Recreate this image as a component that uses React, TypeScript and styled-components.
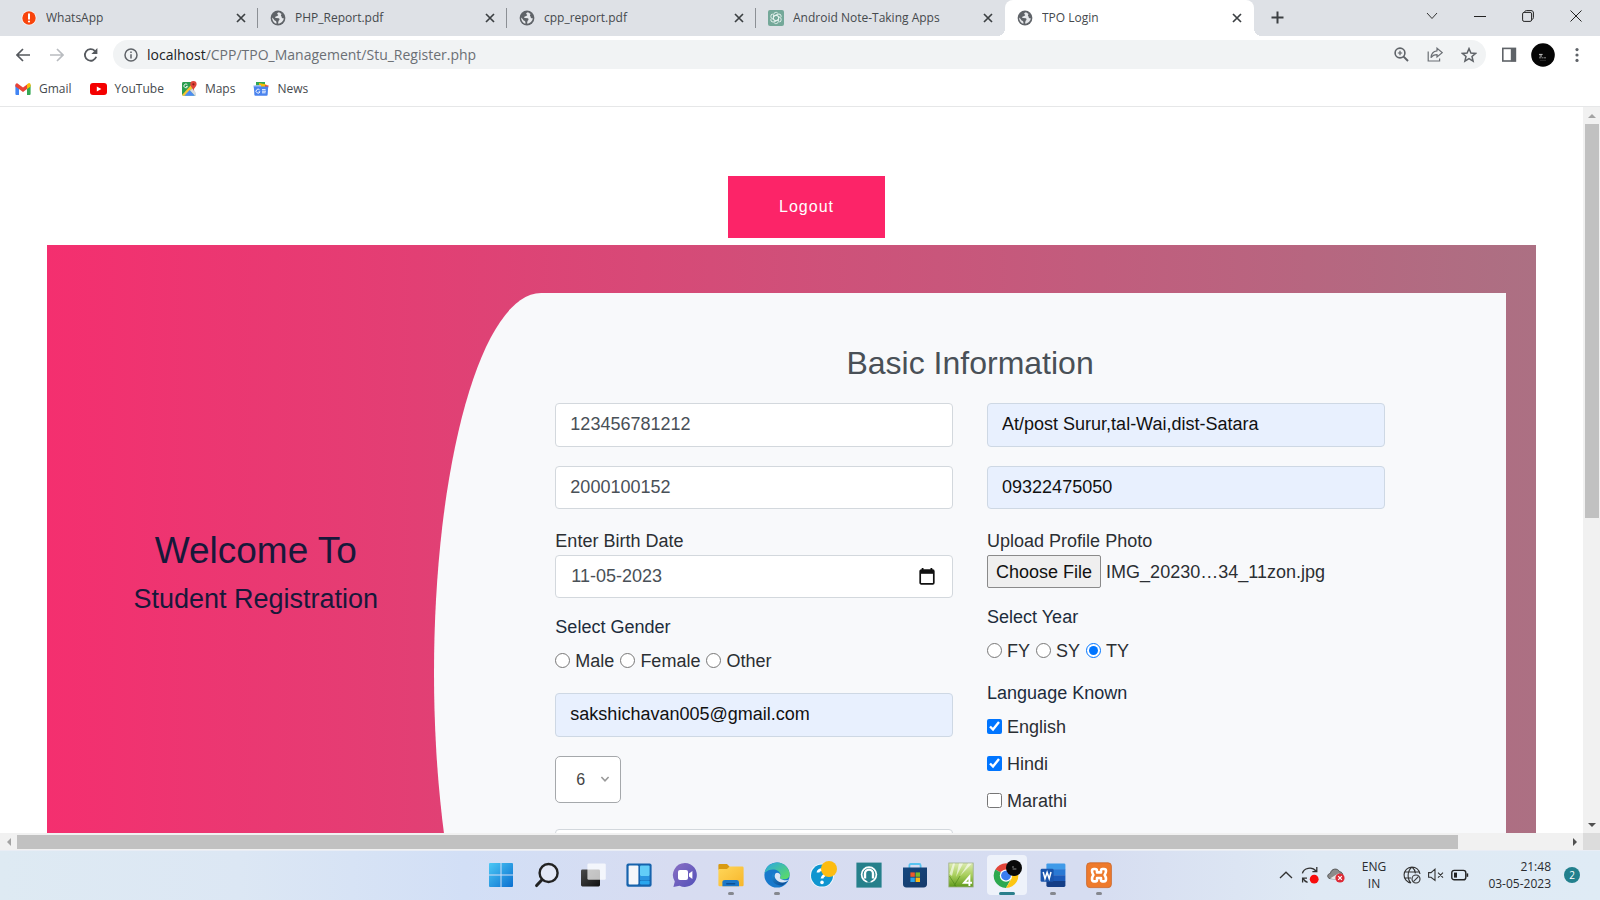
import React, { useRef, useState } from "react";
import styled, { createGlobalStyle, css } from "styled-components";

const UI = `"Open Sans", "Noto Sans", sans-serif`;
const PAGE = `"Liberation Sans", Arial, sans-serif`;

const GlobalStyle = createGlobalStyle`
  *, *::before, *::after { box-sizing: border-box; }
  body { margin: 0; background: #fff; overflow: hidden; }
  button, input, select { font: inherit; color: inherit; margin: 0; }
  svg { display: block; flex: none; }
`;

const Screen = styled.div`
  display: flex;
  flex-direction: column;
  height: 100vh;
  font-family: ${UI};
  color: #45494d;
`;

const plainButton = css`
  border: 0;
  padding: 0;
  background: none;
  display: flex;
  align-items: center;
  justify-content: center;
`;

/* ---------- Browser frame ---------- */

const TabStrip = styled.header`
  display: flex;
  flex: none;
  height: 36px;
  padding-left: 9px;
  background: #dee1e6;
`;

const Tab = styled.div<{ $active?: boolean; $last?: boolean }>`
  position: relative;
  display: flex;
  align-items: center;
  flex: 0 1 249px;
  min-width: 0;
  gap: 9px;
  padding: 0 8px 1px 12px;
  font-size: 12px;
  line-height: 18px;
  ${(p) =>
    !p.$active &&
    !p.$last &&
    css`
      &::after {
        content: "";
        position: absolute;
        right: 0;
        top: 8px;
        width: 1px;
        height: 20px;
        background: #8c9095;
      }
    `}
  ${(p) =>
    p.$active &&
    css`
      background: #fff;
      border-radius: 8px 8px 0 0;
      &::before,
      &::after {
        content: "";
        position: absolute;
        bottom: 0;
        width: 8px;
        height: 8px;
      }
      &::before {
        left: -8px;
        background: radial-gradient(circle at 0 0, transparent 8px, #fff 8px);
      }
      &::after {
        right: -8px;
        background: radial-gradient(circle at 100% 0, transparent 8px, #fff 8px);
      }
    `}
`;

const TabTitle = styled.span`
  flex: 1;
  min-width: 0;
  white-space: nowrap;
  overflow: hidden;
`;

const SmallButton = styled.button`
  ${plainButton}
  width: 18px;
  height: 18px;
`;

const NewTab = styled.button`
  ${plainButton}
  width: 46px;
  height: 34px;
`;

const WindowControls = styled.div`
  display: flex;
  margin-left: auto;
  height: 31px;
`;

const WindowButton = styled.button`
  ${plainButton}
  width: 48px;
`;

const Toolbar = styled.div`
  display: flex;
  flex: none;
  align-items: center;
  height: 36px;
  padding: 4px 6px 3px;
`;

const ToolButton = styled.button`
  ${plainButton}
  width: 34px;
  height: 29px;
`;

const AddressBar = styled.div`
  display: flex;
  flex: 1;
  align-items: center;
  height: 29px;
  margin: 0 6px 0 5px;
  padding: 0 0 0 11px;
  border-radius: 15px;
  background: #f1f3f4;
`;

const Url = styled.div`
  flex: 1;
  margin-left: 9px;
  font-size: 14px;
  line-height: 20px;
  color: #6b6f74;
  b {
    font-weight: 400;
    color: #202124;
  }
`;

const Bookmarks = styled.nav`
  display: flex;
  flex: none;
  align-items: center;
  gap: 18px;
  height: 35px;
  padding: 0 15px 1px;
  border-bottom: 1px solid #e6e7e8;
`;

const Bookmark = styled.a`
  display: flex;
  align-items: center;
  gap: 8px;
  font-size: 12px;
  line-height: 18px;
  color: #45494d;
  text-decoration: none;
`;

/* ---------- Scrolling frame ---------- */

const Frame = styled.div`
  flex: 1;
  min-height: 0;
  display: grid;
  grid-template: minmax(0, 1fr) 17px / minmax(0, 1fr) 17px;
`;

const ScrollTrack = styled.div<{ $horizontal?: boolean }>`
  display: flex;
  flex-direction: ${(p) => (p.$horizontal ? "row" : "column")};
  background: #f1f1f1;
`;

const ScrollArrow = styled.span`
  flex: 0 0 17px;
  height: 17px;
  display: flex;
  align-items: center;
  justify-content: center;
`;

const ScrollRun = styled.div<{ $horizontal?: boolean }>`
  flex: 1;
  display: flex;
  padding: ${(p) => (p.$horizontal ? "2px 0 1px" : "0 1px 0 2px")};
`;

const ScrollThumb = styled.div<{ $w: string; $h: string }>`
  width: ${(p) => p.$w};
  height: ${(p) => p.$h};
  background: #c1c1c1;
`;

const ScrollCorner = styled.div`
  background: #dcdcdc;
`;

/* ---------- Registration page ---------- */

const Page = styled.main`
  overflow: hidden;
  padding: 69px 3% 0;
  font-family: ${PAGE};
  background: #fff;
`;

const LogoutRow = styled.div`
  display: flex;
  justify-content: center;
  padding: 0 0 7px 30px;
`;

const Logout = styled.button`
  ${plainButton}
  width: 157px;
  height: 62px;
  background: #fc2468;
  color: #fff;
  font-size: 16px;
  letter-spacing: 1px;
`;

const Register = styled.section`
  display: grid;
  grid-template-columns: 1fr 3fr;
  padding: 48px 2%;
  background: linear-gradient(to right, #f42f6f, #ac7083);
`;

const Welcome = styled.div`
  padding-top: 236px;
  text-align: center;
  color: #17183a;
`;

const WelcomeTitle = styled.h1`
  margin: 0 0 6px;
  font-size: 37px;
  font-weight: 400;
  line-height: 44px;
`;

const WelcomeText = styled.h2`
  margin: 0;
  font-size: 27px;
  font-weight: 400;
  line-height: 40px;
`;

const Card = styled.form`
  min-height: 760px;
  padding: 50px 121px;
  background: #f8f9fb;
  border-radius: 10% 0 0 10% / 50% 0 0 50%;
  font-size: 18px;
  line-height: 26px;
  color: #2b2f33;
`;

const CardTitle = styled.h3`
  margin: 0 0 20px;
  text-align: center;
  font-size: 32px;
  font-weight: 400;
  line-height: 40px;
  color: #495057;
`;

const Columns = styled.div`
  display: grid;
  grid-template-columns: 1fr 1fr;
  gap: 34px;
`;

const Column = styled.div`
  display: flex;
  flex-direction: column;
  gap: 19px;
`;

const fieldBox = css<{ $filled?: boolean; $tall?: boolean }>`
  width: 100%;
  height: ${(p) => (p.$tall ? 44 : 43)}px;
  padding: 0 14px 1px;
  border: 1px solid ${(p) => (p.$filled ? "#ced8e4" : "#d3d8dd")};
  border-radius: 4px;
  background: ${(p) => (p.$filled ? "#e8f0fe" : "#fff")};
  color: ${(p) => (p.$filled ? "#111" : "#495057")};
`;

const Field = styled.input<{ $filled?: boolean; $tall?: boolean }>`
  ${fieldBox}
  outline: 0;
`;

const DateBox = styled.div<{ $filled?: boolean; $tall?: boolean }>`
  ${fieldBox}
  display: flex;
  align-items: center;
  padding-right: 16px;
`;

const DateInput = styled.input`
  flex: 1;
  min-width: 0;
  padding: 0 1px;
  border: 0;
  outline: 0;
  background: none;
`;

const Label = styled.label`
  display: block;
  margin-bottom: 1px;
`;

const Options = styled.fieldset`
  margin: 0;
  padding: 0;
  border: 0;
  min-width: 0;
`;

const Legend = styled.legend`
  padding: 0;
  margin-bottom: 11px;
  line-height: 20px;
  color: #202c3c;
`;

const OptionRow = styled.div`
  display: flex;
  gap: 6px;
`;

const OptionList = styled.div`
  display: flex;
  flex-direction: column;
  align-items: flex-start;
  gap: 11px;
`;

const Option = styled.label`
  display: flex;
  align-items: center;
  gap: 5px;
  input {
    width: 15px;
    height: 15px;
    margin-bottom: 2px;
  }
`;

const FileRow = styled.div`
  display: flex;
  align-items: center;
  gap: 5px;
  white-space: nowrap;
`;

const FileButton = styled.button`
  height: 33px;
  padding: 0 8px;
  border: 1px solid #8a8a8a;
  border-radius: 2px;
  background: #efefef;
  color: #111;
`;

const SelectWrap = styled.div`
  position: relative;
  align-self: flex-start;
  margin-bottom: 7px;
  svg {
    position: absolute;
    right: 11px;
    top: 18px;
    pointer-events: none;
  }
`;

const Select = styled.select`
  display: block;
  appearance: none;
  width: 66px;
  height: 47px;
  padding: 0 20px;
  border: 1px solid #a5a8ab;
  border-radius: 5px;
  background: #fff;
  font-size: 16px;
  color: #444;
`;

/* ---------- Taskbar ---------- */

const Taskbar = styled.footer`
  display: grid;
  grid-template-columns: 1fr auto 1fr;
  flex: none;
  height: 50px;
  padding-bottom: 1px;
  border-top: 1px solid #e9edf5;
  background: linear-gradient(90deg, #deeaf3 0%, #dce7f4 15%, #d2dff6 29%, #d7dcf1 42%, #d6ddf1 68%, #dfe9f4 82%, #dfebf5 100%);
`;

const Apps = styled.div`
  grid-column: 2;
  display: flex;
  align-items: center;
  gap: 6px;
`;

const AppButton = styled.button<{ $state?: "open" | "active" }>`
  ${plainButton}
  position: relative;
  width: 40px;
  height: 40px;
  border-radius: 4px;
  background: ${(p) => (p.$state === "active" ? "#eef2fa" : "none")};
  ${(p) =>
    p.$state &&
    css`
      &::after {
        content: "";
        position: absolute;
        bottom: 0;
        left: ${p.$state === "active" ? 12 : 17}px;
        width: ${p.$state === "active" ? 16 : 6}px;
        height: 3px;
        border-radius: 2px;
        background: ${p.$state === "active" ? "#2b7f8c" : "#85888f"};
      }
    `}
`;

const Tray = styled.div`
  grid-column: 3;
  display: flex;
  align-items: center;
  justify-content: flex-end;
  padding-right: 20px;
  color: #2a2c30;
  font-size: 12px;
  line-height: 17px;
`;

const TrayIcons = styled.div<{ $gap: number }>`
  display: flex;
  align-items: center;
  gap: ${(p) => p.$gap}px;
`;

const Language = styled.div`
  width: 58px;
  text-align: center;
`;

const Clock = styled.div`
  width: 82px;
  text-align: right;
`;

const Count = styled.span`
  width: 16px;
  height: 16px;
  margin-left: 13px;
  border-radius: 8px;
  background: #22808d;
  color: #fff;
  font-size: 10px;
  line-height: 16px;
  text-align: center;
`;

/* ---------- Icons ---------- */

const Globe = () => (
  <svg width="16" height="16" viewBox="0 0 16 16">
    <circle cx="8" cy="8" r="7.4" fill="#5f6368" />
    <path d="M9 2.2 C7 2.6 6.8 4 7.8 4.6 C9 5 7.6 6.3 6 6.4 C4.8 6.6 5 8 6.3 8 L8.8 8.2 C10 8.6 9.6 10.2 8.6 10.8 L8 13.4 C10 14 13.8 11.5 13.7 8 C12.6 8.6 11.4 7.6 11.6 6.4 C10.6 6 10.8 4.8 11.6 4 Z M2.2 7.4 C2 10.4 4 13 6.6 13.6 C6.4 12 6.4 11.4 5.4 10.8 C4 10.4 4.4 9 2.2 7.4 Z" fill="#e6e8eb" />
  </svg>
);

const Alert = () => (
  <svg width="16" height="16" viewBox="0 0 16 16">
    <circle cx="8" cy="8" r="7.6" fill="#fff" opacity=".7" />
    <circle cx="8" cy="8" r="6.7" fill="#f8440c" />
    <path d="M8 4.2 V8.8" stroke="#fff" strokeWidth="2" strokeLinecap="round" />
    <circle cx="8" cy="11.5" r="1.1" fill="#fff" />
  </svg>
);

const Knot = () => (
  <svg width="16" height="16" viewBox="0 0 16 16">
    <rect width="16" height="16" rx="2" fill="#74a899" />
    <g fill="none" stroke="#e6f3ef" strokeWidth=".9">
      {[0, 60, 120, 180, 240, 300].map((a) => (
        <path key={a} d="M5.6 6.4 V4.6 A2.4 2.4 0 0 1 9.8 3.2 M8 5 L10.6 6.5 V9.4" transform={`rotate(${a} 8 8)`} />
      ))}
    </g>
  </svg>
);

const Cross = () => (
  <svg width="10" height="10" viewBox="0 0 10 10">
    <path d="M1 1 L9 9 M9 1 L1 9" stroke="#3c4043" strokeWidth="1.7" />
  </svg>
);

const Plus = () => (
  <svg width="13" height="13" viewBox="0 0 13 13">
    <path d="M6.5 0.5 V12.5 M0.5 6.5 H12.5" stroke="#3c4043" strokeWidth="2" />
  </svg>
);

const WinChevron = () => (
  <svg width="12" height="8" viewBox="0 0 12 8">
    <path d="M1 1 L6 6.5 L11 1" fill="none" stroke="#333" />
  </svg>
);
const WinMin = () => (
  <svg width="12" height="12" viewBox="0 0 12 12">
    <path d="M0 6.5 H12" stroke="#222" />
  </svg>
);
const WinMax = () => (
  <svg width="12" height="12" viewBox="0 0 12 12">
    <g fill="none" stroke="#222">
      <rect x=".6" y="2.4" width="9" height="9" rx="1.5" />
      <path d="M2.6 2.3 C2.8 1 3.4 .6 4.4 .6 H9 C10.6 .6 11.4 1.4 11.4 3 V7.6 C11.4 8.8 10.8 9.2 9.8 9.4" />
    </g>
  </svg>
);
const WinClose = () => (
  <svg width="12" height="12" viewBox="0 0 12 12">
    <path d="M.5 .5 L11.5 11.5 M11.5 .5 L.5 11.5" stroke="#222" />
  </svg>
);

const Arrow = ({ forward }: { forward?: boolean }) => (
  <svg width="14" height="14" viewBox="0 0 14 14">
    <path
      d={forward ? "M0 7 H12.6 M7 1 L13 7 L7 13" : "M14 7 H1.4 M7 1 L1 7 L7 13"}
      fill="none"
      stroke={forward ? "#b9bcc0" : "#55595e"}
      strokeWidth="1.7"
    />
  </svg>
);

const Reload = () => (
  <svg width="16" height="16" viewBox="0 0 16 16">
    <path d="M13.2 9.8 A5.8 5.8 0 1 1 11.8 3.8" fill="none" stroke="#55595e" strokeWidth="1.8" />
    <path d="M14.4 1 V7 H8.4 Z" fill="#55595e" />
  </svg>
);

const Info = () => (
  <svg width="14" height="14" viewBox="0 0 14 14">
    <circle cx="7" cy="7" r="6" fill="none" stroke="#5f6368" strokeWidth="1.5" />
    <path d="M7 6.2 V10.4 M7 3.6 V5" stroke="#5f6368" strokeWidth="1.5" />
  </svg>
);

const Magnify = () => (
  <svg width="15" height="15" viewBox="0 0 15 15" fill="none" stroke="#5f6368">
    <circle cx="6" cy="6" r="4.9" strokeWidth="1.6" />
    <path d="M9.6 9.6 L14 14" strokeWidth="2" />
    <path d="M3.8 6 H8.2 M6 3.8 V8.2" strokeWidth="1.2" />
  </svg>
);

const Share = () => (
  <svg width="16" height="15" viewBox="0 0 16 15" fill="none" stroke="#6b6f74" strokeWidth="1.2">
    <path d="M1.2 4.6 V14 H12.6 V11.6" />
    <path d="M10 1.2 L15.2 5.6 L10 10 V7.6 C7 7.6 5.2 8.8 4 10.8 C4.2 6.8 6.4 4.2 10 3.8 Z" />
  </svg>
);

const Star = () => (
  <svg width="16" height="16" viewBox="0 0 16 16">
    <path d="M8 1.6 L9.9 6 L14.6 6.4 L11 9.5 L12.1 14.2 L8 11.7 L3.9 14.2 L5 9.5 L1.4 6.4 L6.1 6 Z" fill="none" stroke="#5f6368" strokeWidth="1.5" />
  </svg>
);

const SidePanel = () => (
  <svg width="16" height="16" viewBox="0 0 16 16">
    <rect x="1.8" y="1.4" width="12.6" height="12.6" fill="none" stroke="#5f6368" strokeWidth="1.6" />
    <rect x="9.8" y="1" width="5" height="13.4" fill="#5f6368" />
  </svg>
);

const Avatar = () => (
  <svg width="24" height="24" viewBox="0 0 24 24">
    <circle cx="12" cy="12" r="11.8" fill="#050505" />
    <path d="M8 11.4 H11.6 M8.6 13 H11" stroke="#ccc" strokeWidth="1" />
    <path d="M8 14.8 H15.4" stroke="#999" strokeWidth=".9" strokeDasharray="2 .5" />
    <path d="M9 17.4 H15" stroke="#444" strokeWidth=".6" />
  </svg>
);

const Dots = () => (
  <svg width="4" height="16" viewBox="0 0 4 16" fill="#5f6368">
    <circle cx="2" cy="2.6" r="1.6" />
    <circle cx="2" cy="8" r="1.6" />
    <circle cx="2" cy="13.4" r="1.6" />
  </svg>
);

const GmailIcon = () => (
  <svg width="16" height="12" viewBox="0 0 16 12">
    <path d="M.4 1.6 V10.8 Q.4 12 1.4 12 H4 V5 Z" fill="#4285f4" />
    <path d="M15.6 1.6 V10.8 Q15.6 12 14.6 12 H12 V5 Z" fill="#34a853" />
    <path d="M12 1.2 L14 0 Q15.6 0 15.6 1.8 V3.4 L12 6 Z" fill="#fbbc04" />
    <path d="M.4 3.4 V1.8 Q.6 0 2.2 .2 L8 4.6 L12 1.4 V6 L8 9 L4 6 Z" fill="#ea4335" />
  </svg>
);

const YouTubeIcon = () => (
  <svg width="17" height="12" viewBox="0 0 17 12">
    <rect width="17" height="12" rx="3" fill="#f40000" />
    <path d="M6.8 3.4 L11.4 6 L6.8 8.6 Z" fill="#fff" />
  </svg>
);

const MapsIcon = () => (
  <svg width="15" height="15" viewBox="0 0 15 15">
    <path d="M1.4 1 H9 L13.6 14.6 H1.4 Q0 14.6 0 13 V2.4 Q0 1 1.4 1 Z" fill="#2a9d4f" />
    <path d="M0 14 L10 3 L12 6 L3 14.8 H1 Z" fill="#f5c532" />
    <path d="M2.4 14.8 L7.6 9 L13 14.8 Z" fill="#4c8bf5" />
    <path d="M8 9.6 L11 7 L14 12 V14.4 L13 14.8 Z" fill="#d9dce0" />
    <path d="M11.4 0 A3.2 3.2 0 0 1 14.6 3.3 C14.6 5.6 12 6.6 11.4 10 C10.8 6.6 8.2 5.6 8.2 3.3 A3.2 3.2 0 0 1 11.4 0 Z" fill="#e0443a" />
    <circle cx="11.4" cy="3.3" r="1.1" fill="#8c1c14" />
    <path d="M5.4 3.8 A1.9 1.9 0 1 0 5.6 5.6 H4" fill="none" stroke="#fff" strokeWidth=".9" />
  </svg>
);

const NewsIcon = () => (
  <svg width="16" height="14" viewBox="0 0 16 14">
    <rect x="3" y="0" width="9" height="5" fill="#34a853" />
    <path d="M6 1 L13.4 2.4 V6 H6 Z" fill="#fbbc04" />
    <path d="M.2 3.4 L8 3 V8 H1.6 Z" fill="#a6c0ee" />
    <path d="M12 3 L15.6 3.6 L15 6 H12 Z" fill="#ea4335" />
    <path d="M.8 4.6 H15.2 L14.6 13 Q14.5 13.8 13.6 13.8 H2.4 Q1.5 13.8 1.4 13 Z" fill="#4a83ee" />
    <path d="M6.6 7.8 A2 2 0 1 0 7 9.8 H5.6 M9 7.6 H12.6 M9 9.2 H13 M9 10.8 H12.6" fill="none" stroke="#fff" strokeWidth=".9" />
  </svg>
);

const Calendar = () => (
  <svg width="16" height="17" viewBox="0 0 16 17">
    <path d="M3.6 0 V3 M12.4 0 V3" stroke="#111" strokeWidth="1.8" />
    <rect x="1.2" y="2.2" width="13.6" height="13.6" rx="1" fill="none" stroke="#111" strokeWidth="1.7" />
    <rect x="1" y="2" width="14" height="3.8" fill="#111" />
  </svg>
);

const Triangle = ({ dir, color }: { dir: "up" | "down" | "left" | "right"; color: string }) => {
  const d = {
    up: "M0 6 L4 2 L8 6 Z",
    down: "M0 2 L4 6 L8 2 Z",
    left: "M6 0 L2 4 L6 8 Z",
    right: "M2 0 L6 4 L2 8 Z",
  }[dir];
  return (
    <svg width="8" height="8" viewBox="0 0 8 8">
      <path d={d} fill={color} />
    </svg>
  );
};

const A = ({ children }: { children: React.ReactNode }) => (
  <svg width="28" height="28" viewBox="0 0 28 28">
    {children}
  </svg>
);

const Gradient = ({ id, from, to }: { id: string; from: string; to: string }) => (
  <linearGradient id={id} x1="0" y1="0" x2="1" y2="1">
    <stop offset="0" stopColor={from} />
    <stop offset="1" stopColor={to} />
  </linearGradient>
);

const apps: { name: string; state?: "open" | "active"; icon: React.ReactNode }[] = [
  {
    name: "Start",
    icon: (
      <A>
        <defs><Gradient id="win" from="#4cc8f5" to="#0a6fd0" /></defs>
        <path d="M2 3 Q2 2 3 2 H13.5 V13.5 H2 Z M14.5 2 H25 Q26 2 26 3 V13.5 H14.5 Z M2 14.5 H13.5 V26 H3 Q2 26 2 25 Z M14.5 14.5 H26 V25 Q26 26 25 26 H14.5 Z" fill="url(#win)" />
      </A>
    ),
  },
  {
    name: "Search",
    icon: (
      <A>
        <circle cx="15.6" cy="12" r="9" fill="#e9edf7" fillOpacity=".7" stroke="#222" strokeWidth="2.4" />
        <path d="M9 18.8 L3.6 24.6" stroke="#222" strokeWidth="3" strokeLinecap="round" />
      </A>
    ),
  },
  {
    name: "Task view",
    icon: (
      <A>
        <defs><Gradient id="tv" from="#4a4a4a" to="#111" /></defs>
        <rect x="2" y="8.4" width="19" height="17" rx="1.4" fill="url(#tv)" />
        <rect x="8.4" y="2.4" width="18.4" height="16.4" rx="1.4" fill="#fff" fillOpacity=".72" />
      </A>
    ),
  },
  {
    name: "Widgets",
    icon: (
      <A>
        <rect x="1.4" y="2.4" width="25.2" height="23.4" rx="2" fill="#1663ad" />
        <rect x="3.6" y="4.6" width="9.8" height="19" rx="1" fill="#f4f6fa" />
        <rect x="15" y="4.6" width="9.6" height="10.4" rx="1" fill="#63cdf8" />
        <rect x="15" y="15" width="9.6" height="4" fill="#2b95e0" />
        <rect x="15" y="19.6" width="9.6" height="4" rx="1" fill="#29a6ee" />
      </A>
    ),
  },
  {
    name: "Chat",
    icon: (
      <A>
        <defs><Gradient id="chat" from="#8a6fc4" to="#5250b8" /></defs>
        <path d="M14 2 A12 12 0 1 1 8.6 24.8 L2.4 26 L3.8 20.4 A12 12 0 0 1 14 2 Z" fill="url(#chat)" />
        <rect x="7" y="9" width="10" height="10" rx="2" fill="#fff" />
        <path d="M18 12.4 L21.4 10 V18 L18 15.6 Z" fill="#fff" />
      </A>
    ),
  },
  {
    name: "File Explorer",
    state: "open",
    icon: (
      <A>
        <defs><Gradient id="fe" from="#ffd659" to="#f7b62b" /></defs>
        <path d="M1.4 4 Q1.4 3 2.6 3 H10 L12.4 5.4 V9 H1.4 Z" fill="#d99a12" />
        <path d="M1.4 8 H10 L12.6 5.6 H25.4 Q26.6 5.6 26.6 6.8 V24 Q26.6 25.2 25.4 25.2 H2.6 Q1.4 25.2 1.4 24 Z" fill="url(#fe)" />
        <path d="M5.4 25.2 V21.4 Q5.4 19 8 19 H19.6 Q22 19 22 21.4 V25.2 Z" fill="#1b77c8" />
        <rect x="9" y="22" width="9.4" height="1.6" rx=".8" fill="#0c4f93" />
      </A>
    ),
  },
  {
    name: "Edge",
    state: "open",
    icon: (
      <A>
        <defs>
          <Gradient id="e1" from="#2aa5e6" to="#5fe05c" />
          <Gradient id="e2" from="#1f8fd8" to="#0b3f86" />
        </defs>
        <circle cx="14" cy="14" r="12.6" fill="#1879cc" />
        <path d="M1.6 12 A12.6 12.6 0 0 1 26.6 13 C26.6 18 22 19 18.4 18 C15.8 17 17.6 16 17.6 14 C17 8 7 6.4 1.6 12 Z" fill="url(#e1)" />
        <path d="M10.4 12 C6 18 11 25 19.6 24.6 L25 20 C20 23 12 21 10.4 12 Z" fill="url(#e2)" />
        <path d="M12.4 12.4 C10 16 14 21.6 19.6 21.4 C22.6 21.2 25 20 26 18.4 C23 20 19.6 19 18 18 C15.8 17 17.6 16 17.4 14 C16.4 12 14 11.2 12.4 12.4 Z" fill="#dce6f5" />
      </A>
    ),
  },
  {
    name: "Help",
    icon: (
      <A>
        <circle cx="13" cy="14.6" r="12" fill="#f2f7fc" />
        <circle cx="13" cy="14.6" r="11" fill="#0f95d0" />
        <path d="M9 11.6 C9 7.6 17 7.4 17 11.8 C17 14.4 13 14.4 13 17.6" fill="none" stroke="#fff" strokeWidth="2.8" />
        <circle cx="13" cy="21.4" r="1.8" fill="#fff" />
        <circle cx="20" cy="8" r="8" fill="#fdbc10" />
      </A>
    ),
  },
  {
    name: "Headset",
    icon: (
      <A>
        <rect x="1.4" y="1.6" width="25.2" height="25" fill="#26808b" />
        <circle cx="14" cy="13.6" r="7.4" fill="none" stroke="#fff" strokeWidth="1.7" />
        <path d="M10 17.6 V12.6 A4 4 0 0 1 18 12.6 V17.6" fill="none" stroke="#fff" strokeWidth="2.4" />
        <path d="M12.4 21.6 V18 H15.6 V21.6 Z" fill="#26808b" />
      </A>
    ),
  },
  {
    name: "Store",
    icon: (
      <A>
        <defs><Gradient id="st" from="#15477e" to="#163a6b" /></defs>
        <path d="M8.4 8 V4.4 Q8.4 3 9.8 3 H18.2 Q19.6 3 19.6 4.4 V8" fill="none" stroke="#59c3f0" strokeWidth="1.8" />
        <path d="M2 6.4 H26 V23 Q26 26.4 22.6 26.4 H5.4 Q2 26.4 2 23 Z" fill="url(#st)" />
        <rect x="9.4" y="11.4" width="4.4" height="4.4" fill="#ef5a2b" />
        <rect x="14.6" y="11.4" width="4.4" height="4.4" fill="#7db928" />
        <rect x="9.4" y="16.6" width="4.4" height="4.4" fill="#2ba3e8" />
        <rect x="14.6" y="16.6" width="4.4" height="4.4" fill="#fdb913" />
      </A>
    ),
  },
  {
    name: "Editor",
    icon: (
      <A>
        <defs>
          <linearGradient id="ed" x1="0" y1="0" x2="0" y2="1">
            <stop offset="0" stopColor="#dcebb0" />
            <stop offset=".5" stopColor="#a9cf5c" />
            <stop offset="1" stopColor="#5f9a1c" />
          </linearGradient>
        </defs>
        <rect x="1.8" y="2" width="24.4" height="24" fill="url(#ed)" stroke="#9fb08a" strokeWidth=".8" />
        <path d="M2.4 13 L6 2.6 H8 L5 15 Z M12 2.6 H16 L9 16 Z M21 2.6 H25 L13 15 Z" fill="#fff" opacity=".6" />
        <path d="M2.4 15 L9 25.4 M7 25 L13 15" stroke="#3f7a12" opacity=".5" />
        <path d="M22.4 25 V15.6 L17 21.8 H25" fill="none" stroke="#fff" strokeWidth="1.9" />
      </A>
    ),
  },
  {
    name: "Chrome",
    state: "active",
    icon: (
      <svg width="30" height="30" viewBox="0 0 30 30">
        <path d="M14 15.6 L3.3 9.4 A12.4 12.4 0 0 1 24.7 9.4 Z" fill="#e2453a" />
        <path d="M14 15.6 L3.3 9.4 A12.4 12.4 0 0 0 14 28 L19.2 18.6 Z" fill="#2da94f" />
        <path d="M14 9.4 H24.7 A12.4 12.4 0 0 1 14 28 L19.4 18.7 Z" fill="#fdc613" />
        <circle cx="14" cy="15.6" r="6.2" fill="#fff" />
        <circle cx="14" cy="15.6" r="4.9" fill="#3a7df0" />
        <circle cx="22" cy="8" r="8" fill="#080808" />
        <path d="M20 7 H22 M20.6 9 H24.4" stroke="#aaa" strokeWidth=".8" />
      </svg>
    ),
  },
  {
    name: "Word",
    state: "open",
    icon: (
      <A>
        <path d="M7.4 3.6 Q7.4 2.4 8.6 2.4 H25 Q26.4 2.4 26.4 3.8 V8.4 H7.4 Z" fill="#3f9ae8" />
        <rect x="7.4" y="8.2" width="19" height="6" fill="#2a79d4" />
        <rect x="7.4" y="14.2" width="19" height="6" fill="#1c5bba" />
        <path d="M7.4 20 H26.4 V24.6 Q26.4 26 25 26 H8.8 Q7.4 26 7.4 24.6 Z" fill="#143e87" />
        <rect x="1.6" y="7.8" width="13" height="13" rx="1.4" fill="#1a55ac" />
        <path d="M4.2 11 L6 17.6 L8.1 11.4 L10.2 17.6 L12 11" fill="none" stroke="#fff" strokeWidth="1.5" />
      </A>
    ),
  },
  {
    name: "XAMPP",
    state: "open",
    icon: (
      <A>
        <rect x="1.6" y="1.8" width="24.8" height="24.8" rx="3.4" fill="#ee7a2c" stroke="#c9662a" strokeWidth=".8" />
        <path d="M10 8 H9 Q7 8 7 10 Q7 12 8.4 14 Q7 16 7 18 Q7 20.4 9 20.4 H10.6 Q12 20.4 12 18.4 V17 H16 V18.4 Q16 20.4 17.4 20.4 H19 Q21 20.4 21 18 Q21 16 19.6 14 Q21 12 21 10 Q21 8 19 8 H17.4 Q16 8 16 10 V11.4 H12 V10 Q12 8 10 8 Z" fill="none" stroke="#fff" strokeWidth="2.6" strokeLinejoin="round" />
      </A>
    ),
  },
];

const tabs = [
  { title: "WhatsApp", icon: <Alert /> },
  { title: "PHP_Report.pdf", icon: <Globe /> },
  { title: "cpp_report.pdf", icon: <Globe /> },
  { title: "Android Note-Taking Apps", icon: <Knot /> },
  { title: "TPO Login", icon: <Globe /> },
];

const bookmarks = [
  { title: "Gmail", icon: <GmailIcon /> },
  { title: "YouTube", icon: <YouTubeIcon /> },
  { title: "Maps", icon: <MapsIcon /> },
  { title: "News", icon: <NewsIcon /> },
];

function BrowserBars() {
  return (
    <>
      <TabStrip>
        {tabs.map((t, i) => (
          <Tab key={t.title} $active={i === 4} $last={i === 3}>
            {t.icon}
            <TabTitle>{t.title}</TabTitle>
            <SmallButton aria-label={`Close ${t.title}`}><Cross /></SmallButton>
          </Tab>
        ))}
        <NewTab aria-label="New tab"><Plus /></NewTab>
        <WindowControls>
          <WindowButton aria-label="Search tabs"><WinChevron /></WindowButton>
          <WindowButton aria-label="Minimize"><WinMin /></WindowButton>
          <WindowButton aria-label="Restore"><WinMax /></WindowButton>
          <WindowButton aria-label="Close"><WinClose /></WindowButton>
        </WindowControls>
      </TabStrip>
      <Toolbar>
        <ToolButton aria-label="Back"><Arrow /></ToolButton>
        <ToolButton aria-label="Forward"><Arrow forward /></ToolButton>
        <ToolButton aria-label="Reload"><Reload /></ToolButton>
        <AddressBar>
          <Info />
          <Url><b>localhost</b>/CPP/TPO_Management/Stu_Register.php</Url>
          <ToolButton aria-label="Zoom"><Magnify /></ToolButton>
          <ToolButton aria-label="Share"><Share /></ToolButton>
          <ToolButton aria-label="Bookmark this page"><Star /></ToolButton>
        </AddressBar>
        <ToolButton aria-label="Side panel"><SidePanel /></ToolButton>
        <ToolButton aria-label="Profile"><Avatar /></ToolButton>
        <ToolButton aria-label="Menu"><Dots /></ToolButton>
      </Toolbar>
      <Bookmarks>
        {bookmarks.map((b) => (
          <Bookmark key={b.title} href="#">{b.icon}{b.title}</Bookmark>
        ))}
      </Bookmarks>
    </>
  );
}

function Choices({ name, type, items, checked }: { name: string; type: "radio" | "checkbox"; items: string[]; checked: string[] }) {
  return (
    <>
      {items.map((item) => (
        <Option key={item}>
          <input type={type} name={name} defaultChecked={checked.includes(item)} />
          {item}
        </Option>
      ))}
    </>
  );
}

function RegisterPage() {
  const file = useRef<HTMLInputElement>(null);
  const [fileName, setFileName] = useState("IMG_20230…34_11zon.jpg");
  return (
    <Page>
      <LogoutRow><Logout>Logout</Logout></LogoutRow>
      <Register>
        <Welcome>
          <WelcomeTitle>Welcome To</WelcomeTitle>
          <WelcomeText>Student Registration</WelcomeText>
        </Welcome>
        <Card>
          <CardTitle>Basic Information</CardTitle>
          <Columns>
            <Column>
              <Field $tall aria-label="Aadhar number" defaultValue="123456781212" />
              <Field aria-label="Enrollment number" defaultValue="2000100152" />
              <div>
                <Label htmlFor="birth">Enter Birth Date</Label>
                <DateBox>
                  <DateInput id="birth" defaultValue="11-05-2023" />
                  <SmallButton type="button" aria-label="Open calendar"><Calendar /></SmallButton>
                </DateBox>
              </div>
              <Options>
                <Legend>Select Gender</Legend>
                <OptionRow><Choices name="gender" type="radio" items={["Male", "Female", "Other"]} checked={[]} /></OptionRow>
              </Options>
              <Field $filled $tall type="email" aria-label="Email" defaultValue="sakshichavan005@gmail.com" />
              <SelectWrap>
                <Select aria-label="Semester" defaultValue="6">
                  {["1", "2", "3", "4", "5", "6"].map((n) => <option key={n}>{n}</option>)}
                </Select>
                <svg width="10" height="10" viewBox="0 0 10 10">
                  <path d="M1.4 3 L5 6.8 L8.6 3" fill="none" stroke="#999" strokeWidth="1.6" />
                </svg>
              </SelectWrap>
              <Field aria-label="Password" type="password" />
            </Column>
            <Column>
              <Field $filled $tall aria-label="Address" defaultValue="At/post Surur,tal-Wai,dist-Satara" />
              <Field $filled type="tel" aria-label="Phone" defaultValue="09322475050" />
              <div>
                <Label htmlFor="photo">Upload Profile Photo</Label>
                <FileRow>
                  <FileButton type="button" onClick={() => file.current?.click()}>Choose File</FileButton>
                  <span>{fileName}</span>
                  <input id="photo" ref={file} type="file" hidden onChange={(e) => setFileName(e.target.files?.[0]?.name ?? "")} />
                </FileRow>
              </div>
              <Options>
                <Legend>Select Year</Legend>
                <OptionRow><Choices name="year" type="radio" items={["FY", "SY", "TY"]} checked={["TY"]} /></OptionRow>
              </Options>
              <Options>
                <Legend>Language Known</Legend>
                <OptionList><Choices name="language" type="checkbox" items={["English", "Hindi", "Marathi"]} checked={["English", "Hindi"]} /></OptionList>
              </Options>
            </Column>
          </Columns>
        </Card>
      </Register>
    </Page>
  );
}

function TaskbarView() {
  return (
    <Taskbar>
      <Apps>
        {apps.map((a) => (
          <AppButton key={a.name} $state={a.state} aria-label={a.name}>{a.icon}</AppButton>
        ))}
      </Apps>
      <Tray>
        <TrayIcons $gap={8}>
          <svg width="14" height="8" viewBox="0 0 14 8"><path d="M1 7 L7 1.2 L13 7" fill="none" stroke="#333" strokeWidth="1.3" /></svg>
          <svg width="18" height="18" viewBox="0 0 18 18">
            <path d="M1.4 7.4 C2.6 2 11 0 15 5 M15.8 1 V5.6 H11.4 M1.6 16.6 V12.2 H6 M2 12.4 C3 14.4 4.6 15.8 6.6 16.4" fill="none" stroke="#333" strokeWidth="1.3" />
            <circle cx="13.2" cy="13.2" r="4.4" fill="#f80c0c" />
          </svg>
          <svg width="18" height="16" viewBox="0 0 18 16">
            <path d="M3 11.6 C-.4 11 .2 6.6 3.4 6.4 C4 1.4 10.6 .6 12.4 4.6 C15.4 5 16 7 15.4 9 L9 12 Z" fill="#8b8b8b" stroke="#444" strokeWidth=".8" />
            <path d="M3 11.6 L12 6 L9 12.4 Z" fill="#e6e6e6" />
            <circle cx="13" cy="11" r="4.6" fill="#dd2a36" />
            <path d="M11.2 9.2 L14.8 12.8 M14.8 9.2 L11.2 12.8" stroke="#fff" strokeWidth="1.2" />
          </svg>
        </TrayIcons>
        <Language>ENG<br />IN</Language>
        <TrayIcons $gap={7}>
          <svg width="18" height="18" viewBox="0 0 18 18" fill="none" stroke="#333" strokeWidth="1.1">
            <path d="M8 17 A8 8 0 1 1 17 8 M1.6 6 H16 M1.4 12 H8 M8 17 C4 13 4 5 9 1 C11 2.6 12.2 4.8 12.4 7.4" />
            <circle cx="13" cy="13" r="4" />
            <path d="M10.4 15.6 L15.6 10.4" />
          </svg>
          <svg width="16" height="14" viewBox="0 0 16 14" fill="none" stroke="#333" strokeWidth="1.1">
            <path d="M.6 4.6 H3 L7 1.2 V12.4 L3 9.2 H.6 Z M10 4.6 L15 9.6 M15 4.6 L10 9.6" />
          </svg>
          <svg width="18" height="12" viewBox="0 0 18 12">
            <rect x=".8" y="1.4" width="14" height="9.4" rx="2.4" fill="none" stroke="#222" strokeWidth="1.4" />
            <rect x="3" y="3.6" width="3" height="5" fill="#222" />
            <path d="M16.4 4.4 V7.8" stroke="#222" strokeWidth="1.6" />
          </svg>
        </TrayIcons>
        <Clock>21:48<br />03-05-2023</Clock>
        <Count>2</Count>
      </Tray>
    </Taskbar>
  );
}

export default function App() {
  return (
    <Screen>
      <GlobalStyle />
      <BrowserBars />
      <Frame>
        <RegisterPage />
        <ScrollTrack>
          <ScrollArrow><Triangle dir="up" color="#a3a3a3" /></ScrollArrow>
          <ScrollRun><ScrollThumb $w="100%" $h="57%" /></ScrollRun>
          <ScrollArrow><Triangle dir="down" color="#505050" /></ScrollArrow>
        </ScrollTrack>
        <ScrollTrack $horizontal>
          <ScrollArrow><Triangle dir="left" color="#a3a3a3" /></ScrollArrow>
          <ScrollRun $horizontal><ScrollThumb $w="93%" $h="100%" /></ScrollRun>
          <ScrollArrow><Triangle dir="right" color="#505050" /></ScrollArrow>
        </ScrollTrack>
        <ScrollCorner />
      </Frame>
      <TaskbarView />
    </Screen>
  );
}
